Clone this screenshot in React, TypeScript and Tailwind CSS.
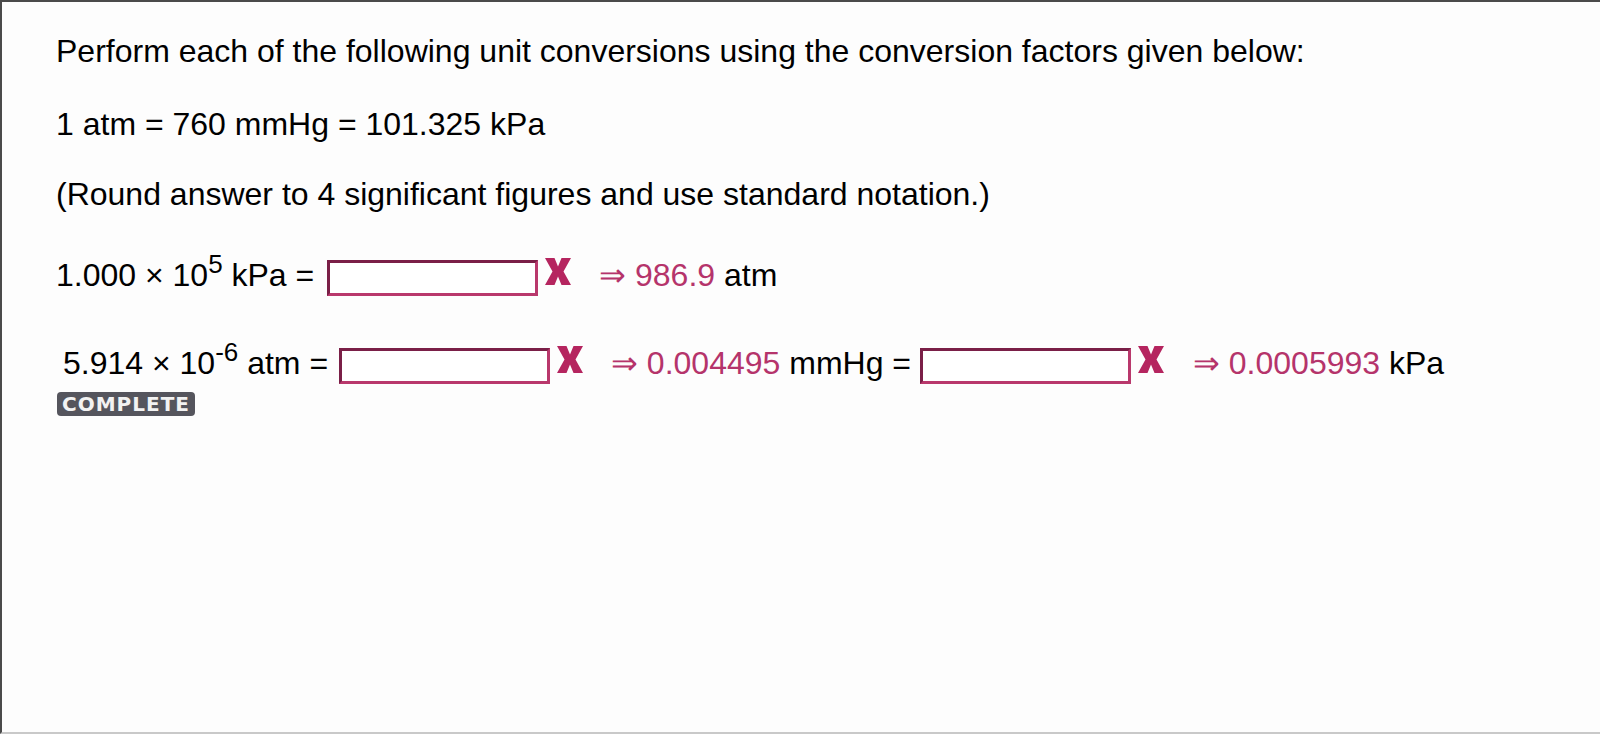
import React from 'react';

const WrongMark: React.FC = () => (
  <svg width="26" height="27" viewBox="0 0 26 27" className="ml-[7px] mt-[1px] shrink-0">
    <polygon
      points="0,0 9.5,0 13,8.5 16.5,0 26,0 18.5,13.5 26,27 16.5,27 13,18.5 9.5,27 0,27 7.5,13.5"
      fill="#b5255f"
    />
  </svg>
);

const AnswerBox: React.FC<{ className?: string }> = ({ className = '' }) => (
  <div
    className={`mt-[3px] h-[36px] w-[211px] shrink-0 border-[3px] border-t-[#7a1f47] border-l-[#7a1f47] border-b-[#b9386c] border-r-[#b9386c] bg-white ${className}`}
  />
);

const Given: React.FC<{ value: string }> = ({ value }) => (
  <span className="text-[#b5346b]">⇒ {value}</span>
);

export default function App() {
  return (
    <div
      className="h-[734px] w-full border-t-2 border-l-2 border-b-2 border-t-[#4a4a4a] border-l-[#4a4a4a] border-b-[#c9c9c9] bg-[#fdfdfd] pl-[54px] pt-[31px] text-[32px] leading-[36px] text-black"
      style={{ fontFamily: '"Liberation Sans", Arial, sans-serif' }}
    >
      <p>Perform each of the following unit conversions using the conversion factors given below:</p>
      <p className="mt-[37px]">1 atm = 760 mmHg = 101.325 kPa</p>
      <p className="mt-[34px]">(Round answer to 4 significant figures and use standard notation.)</p>

      <div className="mt-[45px] flex h-[36px] items-start whitespace-pre">
        <span>
          1.000 × 10<sup className="text-[26px]">5</sup> kPa ={' '}
        </span>
        <AnswerBox className="ml-[4px]" />
        <WrongMark />
        <span className="ml-[28px]">
          <Given value="986.9" /> atm
        </span>
      </div>

      <div className="mt-[52px] flex h-[36px] items-start whitespace-pre pl-[7px]">
        <span>
          5.914 × 10<sup className="text-[26px]">-6</sup> atm ={' '}
        </span>
        <AnswerBox className="ml-[2px]" />
        <WrongMark />
        <span className="ml-[28px]">
          <Given value="0.004495" /> mmHg ={' '}
        </span>
        <AnswerBox />
        <WrongMark />
        <span className="ml-[29px]">
          <Given value="0.0005993" /> kPa
        </span>
      </div>

      <div
        className="mt-[11px] ml-[1px] inline-flex h-[24px] items-center rounded-[4px] bg-[#55555d] px-[5px] text-[20px] font-bold leading-none tracking-[1px] text-[#f2f2f2]"
        style={{ fontFamily: '"DejaVu Sans", Verdana, sans-serif' }}
      >
        COMPLETE
      </div>
    </div>
  );
}
